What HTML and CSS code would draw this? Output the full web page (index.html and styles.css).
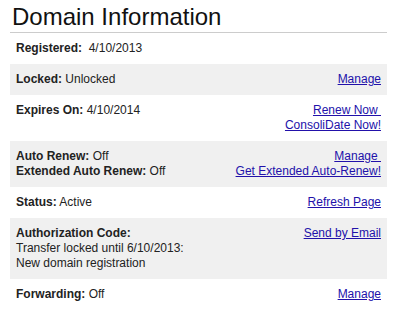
FILE: index.html
```html
<!DOCTYPE html>
<html lang="en">
<head>
    <meta charset="UTF-8">
    <title>Domain Information</title>
    <link rel="stylesheet" href="styles.css">
</head>
<body>
    <div class="container">
        <h2>Domain Information</h2>

        <div class="row">
            <div class="info"><b>Registered:</b>&nbsp; 4/10/2013</div>
            <div class="links"></div>
        </div>
        <div class="row shade">
            <div class="info"><b>Locked:</b> Unlocked</div>
            <div class="links"><a href="#">Manage</a></div>
        </div>
        <div class="row">
            <div class="info"><b>Expires On:</b> 4/10/2014</div>
            <div class="links"><a href="#">Renew Now </a><br><a href="#">ConsoliDate Now!</a></div>
        </div>
        <div class="row shade">
            <div class="info"><b>Auto Renew:</b> Off<br><b>Extended Auto Renew:</b> Off</div>
            <div class="links"><a href="#">Manage </a><br><a href="#">Get Extended Auto-Renew!</a></div>
        </div>
        <div class="row">
            <div class="info"><b>Status:</b> Active</div>
            <div class="links"><a href="#">Refresh Page</a></div>
        </div>
        <div class="row shade">
            <div class="info"><b>Authorization Code:</b><br>Transfer locked until 6/10/2013:<br>New domain registration</div>
            <div class="links"><a href="#">Send by Email</a></div>
        </div>
        <div class="row">
            <div class="info"><b>Forwarding:</b> Off</div>
            <div class="links"><a href="#">Manage</a></div>
        </div>
    </div>
</body>
</html>
```

FILE: styles.css
```css
body {
    font-family: "Liberation Sans", Arial, sans-serif;
    font-size: 12px;
    color: #222222;
    background-color: #ffffff;
    margin: 0;
    padding: 0;
}
.container {
    width: 377px;
    margin-left: 10px;
}
h2 {
    font-size: 24px;
    font-weight: normal;
    color: #111111;
    margin: 0;
    padding: 3px 0 1px 2px;
    line-height: 28px;
    border-bottom: 1px solid #cccccc;
}
.row {
    display: flex;
    justify-content: space-between;
    padding: 8px 6px;
    line-height: 15px;
}
.row.shade {
    background-color: #f0f0f0;
}
.links {
    text-align: right;
}
.links a {
    color: #2211aa;
    white-space: pre;
}
```
